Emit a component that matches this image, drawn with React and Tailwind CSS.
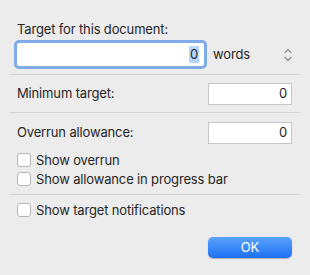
export default function App() {
  const Check = ({ label }) => (
    <div className="flex items-center h-[14px] pl-[17px]">
      <div className="w-[14px] h-[14px] rounded-[3px] border border-[#b5b5b5] bg-white" />
      <span className="ml-[5px] leading-[14px]">{label}</span>
    </div>
  );
  const Sep = ({ cls }) => <div className={`h-px bg-[#d5d5d5] ml-[9px] mr-[10px] ${cls}`} />;
  return (
    <div className="w-[310px] h-[275px] bg-[#ececec] font-['Inter',sans-serif] text-[13px] tracking-[-0.15px] text-[#262626] flex flex-col">
      <div className="pt-[21px] pl-[17px] leading-[16px]">Target for this document:</div>
      <div className="flex items-center mt-[3px] pl-[14px] h-[29px]">
        <div className="w-[193px] h-[29px] rounded-[5px] bg-[#80abeb] p-[3px]">
          <div className="bg-white h-full rounded-[2px] flex items-center justify-end pr-[5px]">
            <span className="bg-[#b4d5fc] px-[1px] leading-[17px]">0</span>
          </div>
        </div>
        <span className="ml-[6px]">words</span>
        <svg className="ml-[33px]" width="10" height="16" viewBox="0 0 10 16" fill="none" stroke="#8e8e8e" strokeWidth="1.3" strokeLinecap="round" strokeLinejoin="round">
          <path d="M2 5.5 L5 2.5 L8 5.5" />
          <path d="M2 10.5 L5 13.5 L8 10.5" />
        </svg>
      </div>
      <Sep cls="mt-[5px]" />
      <div className="flex items-center justify-between mt-[8px] pl-[17px] pr-[18px]">
        <span>Minimum target:</span>
        <div className="w-[84px] h-[22px] bg-white border border-[#c6c6c6] flex items-center justify-end pr-[4px]">0</div>
      </div>
      <Sep cls="mt-[7px]" />
      <div className="flex items-center justify-between mt-[9px] pl-[17px] pr-[18px]">
        <span>Overrun allowance:</span>
        <div className="w-[84px] h-[22px] bg-white border border-[#c6c6c6] flex items-center justify-end pr-[4px]">0</div>
      </div>
      <div className="mt-[9px] flex flex-col gap-[5px]">
        <Check label="Show overrun" />
        <Check label="Show allowance in progress bar" />
      </div>
      <Sep cls="mt-[8px]" />
      <div className="mt-[8px]">
        <Check label="Show target notifications" />
      </div>
      <div className="flex justify-end pr-[18px] mt-[20px]">
        <div className="w-[84px] h-[21px] rounded-[5px] bg-linear-to-b from-[#5aa3fb] to-[#1c6ff2] text-white flex items-center justify-center shadow-[0_0.5px_1px_rgba(0,0,0,0.25)]">OK</div>
      </div>
    </div>
  );
}
